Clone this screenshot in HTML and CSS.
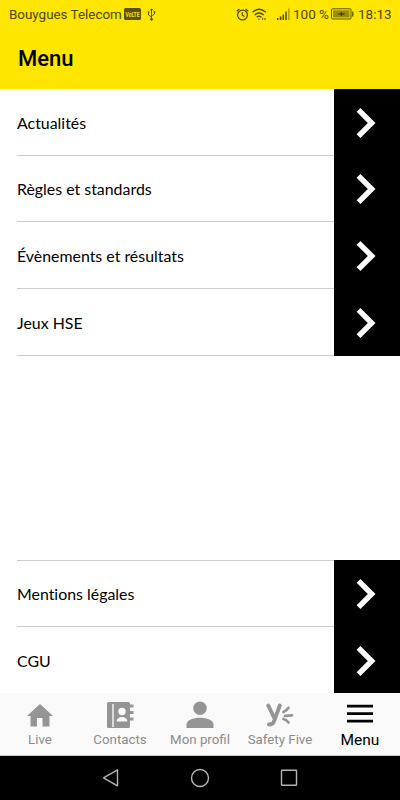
FILE: index.html
```
<!DOCTYPE html>
<html lang="fr">
<head>
    <meta charset="UTF-8">
    <meta name="viewport" content="width=device-width, initial-scale=1.0">
    <title>Menu</title>
    <link rel="stylesheet" href="styles.css">
</head>
<body>
    <div class="status-bar">
        <span class="carrier">Bouygues Telecom</span>
        <svg class="volte" width="17" height="12" viewBox="0 0 17 12">
            <rect width="17" height="12" rx="1.5" fill="#5b5206"/>
            <text x="1.500" y="8.800" textLength="14" lengthAdjust="spacingAndGlyphs">VoLTE</text>
        </svg>
        <svg class="usb" width="9" height="13" viewBox="0 0 9 13" fill="none" stroke="#5b5206">
            <path d="M4.500 1v10M1.500 4.500v2.500l3 2M7.500 4v2l-3 2M3 2.500L4.500 .8L6 2.500"/>
            <circle cx="4.500" cy="11.300" r="1" fill="#5b5206"/>
            <path d="M.7 4.300h1.600M6.700 4h1.600" stroke-width="1.500"/>
        </svg>
        <div class="status-right">
            <svg class="alarm" width="13" height="13" viewBox="0 0 13 13" fill="none" stroke="#4d4505" stroke-width="1.200">
                <circle cx="6.500" cy="7" r="4.900"/>
                <path d="M6.300 4.200v3l2.200 1.300M.7 3.300L3.400 1M12.300 3.300L9.600 1"/>
            </svg>
            <svg class="wifi" width="15" height="13" viewBox="0 0 15 13" fill="none" stroke="#4d4505" stroke-width="1.300">
                <path d="M.7 4.300Q7 -1.800 13.800 4.300M2.700 6.900Q7 3 11.700 6.900M4.700 9.200Q7 7.200 9.500 9.200"/>
                <circle cx="7" cy="11.300" r=".8" fill="#4d4505" stroke="none"/>
                <path d="M10.700 9.800v2M13 10v2" stroke-width="1"/>
            </svg>
            <svg class="signal" width="13" height="13" viewBox="0 0 13 13" fill="#4d4505">
                <path d="M0 10h1.500v2H0zM2.800 8.500h1.500V12H2.800zM5.500 6.500H7V12H5.500zM8.300 3.500h1.500V12H8.300z"/>
                <path d="M11.200 .5h1.300V12h-1.300z" opacity=".5"/>
            </svg>
            <span class="percent">100 %</span>
            <svg class="battery" width="23" height="12" viewBox="0 0 23 12">
                <rect x=".5" y=".8" width="19.500" height="10.200" rx="1" fill="none" stroke="#5b5206"/>
                <rect x="2" y="2.300" width="16.500" height="7.200" fill="#9d8d04"/>
                <path d="M5.500 6l4-.8 1-1.700.7 1.700 4 .8-4 .8-1 1.700-.7-1.700z" fill="#3b3504"/>
                <path d="M21.800 3.500v5" stroke="#5b5206" stroke-width="1.300"/>
            </svg>
            <span class="time">18:13</span>
        </div>
    </div>
    <header class="header">
        <h1>Menu</h1>
    </header>

    <main class="content">
        <ul class="menu-list">
            <li class="row">
                <span class="row-label">Actualités</span>
                <span class="row-arrow"><svg width="20" height="32" viewBox="0 0 20 32"><path d="M2.500 2.800L15.700 16L2.500 29.200"/></svg></span>
            </li>
            <li class="row">
                <span class="row-label">Règles et standards</span>
                <span class="row-arrow"><svg width="20" height="32" viewBox="0 0 20 32"><path d="M2.500 2.800L15.700 16L2.500 29.200"/></svg></span>
            </li>
            <li class="row">
                <span class="row-label">Évènements et résultats</span>
                <span class="row-arrow"><svg width="20" height="32" viewBox="0 0 20 32"><path d="M2.500 2.800L15.700 16L2.500 29.200"/></svg></span>
            </li>
            <li class="row">
                <span class="row-label">Jeux HSE</span>
                <span class="row-arrow"><svg width="20" height="32" viewBox="0 0 20 32"><path d="M2.500 2.800L15.700 16L2.500 29.200"/></svg></span>
            </li>
        </ul>
        <ul class="menu-list legal">
            <li class="row">
                <span class="row-label">Mentions légales</span>
                <span class="row-arrow"><svg width="20" height="32" viewBox="0 0 20 32"><path d="M2.500 2.800L15.700 16L2.500 29.200"/></svg></span>
            </li>
            <li class="row">
                <span class="row-label">CGU</span>
                <span class="row-arrow"><svg width="20" height="32" viewBox="0 0 20 32"><path d="M2.500 2.800L15.700 16L2.500 29.200"/></svg></span>
            </li>
        </ul>
    </main>

    <nav class="tabs">
        <a class="tab">
            <svg width="28" height="28" viewBox="0 0 28 28" fill="#959595">
                <path d="M14 3L1 15h3.500v10.500H11V17h5.500v8.500h7V15H27z"/>
            </svg>
            <span>Live</span>
        </a>
        <a class="tab">
            <svg width="28" height="28" viewBox="0 0 28 28">
                <path d="M2.500 1h20a1.500 1.500 0 0 1 1.500 1.500V3.500h3.500v3H24v3.500h3.500V13H24v3.500h3.500v3H24v6a1.500 1.500 0 0 1-1.500 1.500h-20A1.500 1.500 0 0 1 1 25.500v-23A1.500 1.500 0 0 1 2.500 1z" fill="#959595"/>
                <path d="M7 3v23" stroke="#fafafa" stroke-width="1.400"/>
                <circle cx="16" cy="10.500" r="3.700" fill="#fafafa"/>
                <path d="M10.700 20.500c0-6 10.600-6 10.600 0z" fill="#fafafa"/>
            </svg>
            <span>Contacts</span>
        </a>
        <a class="tab">
            <svg width="28" height="28" viewBox="0 0 28 28" fill="#959595">
                <circle cx="14" cy="7.300" r="6.800"/>
                <path d="M.5 27v-3.500C.5 14.500 27.500 14.500 27.500 23.500V27z"/>
            </svg>
            <span>Mon profil</span>
        </a>
        <a class="tab">
            <svg width="28" height="28" viewBox="0 0 28 28" fill="none" stroke="#959595" stroke-linecap="round">
                <path d="M2.300 4.500L8 16.500M13.800 4.500L8.500 19Q7 24 3 23.500" stroke-width="3.900"/>
                <path d="M17.500 11Q20.500 9.800 22.500 6.800M19 14.800L26 14.300M17.500 18Q20.500 18.800 22.500 21.500" stroke-width="2.800"/>
            </svg>
            <span>Safety Five</span>
        </a>
        <a class="tab active">
            <svg width="28" height="28" viewBox="0 0 28 28" stroke="#000" stroke-width="2.800">
                <path d="M1 5.200h26M1 12.700h26M1 20.200h26"/>
            </svg>
            <span>Menu</span>
        </a>
    </nav>

    <div class="system-nav">
        <svg width="18" height="20" viewBox="0 0 18 20"><path d="M15.500 1.800v16L1.500 9.800z"/></svg>
        <svg width="20" height="20" viewBox="0 0 20 20"><circle cx="10" cy="10" r="8.500"/></svg>
        <svg width="18" height="20" viewBox="0 0 18 20"><rect x="1.500" y="2.200" width="15" height="15" rx=".5"/></svg>
    </div>
</body>
</html>
```
FILE: styles.css
```
* {
    box-sizing: border-box;
}

body {
    width: 400px;
    height: 800px;
    margin: 0;
    display: flex;
    flex-direction: column;
    overflow: hidden;
    background: #fff;
    font-family: Roboto, sans-serif;
    color: #000;
}

.status-bar {
    height: 28px;
    display: flex;
    align-items: center;
    padding: 0 9px;
    background: #ffe600;
    color: #4d4505;
    font-size: 13.5px;
    white-space: nowrap;
}

.carrier {
    width: 115px;
    font-size: 13.4px;
}

.volte {
    flex-shrink: 0;
    overflow: visible;
}

.volte text {
    font: bold 7.5px Roboto, sans-serif;
    fill: #ffe600;
}

.usb {
    margin-left: 6px;
}

.status-right {
    display: flex;
    align-items: center;
    margin-left: auto;
}

.wifi {
    margin-left: 3px;
}

.signal {
    margin-left: 10px;
}

.percent {
    width: 36px;
    margin-left: 3px;
}

.battery {
    margin-left: 2px;
}

.time {
    width: 33px;
    margin-left: 4px;
}

.header {
    height: 61px;
    display: flex;
    align-items: center;
    padding: 0 18px;
    background: #ffe600;
}

.header h1 {
    margin: 0;
    font-size: 22px;
    font-weight: 500;
}

.content {
    flex: 1;
    display: flex;
    flex-direction: column;
    justify-content: space-between;
}

.menu-list {
    margin: 0;
    padding: 0;
    list-style: none;
}

.row {
    height: 66.65px;
    display: flex;
    padding-left: 17px;
}

.row-label {
    flex: 1;
    display: flex;
    align-items: center;
    padding-top: 1px;
    border-bottom: 1px solid #ccc;
    font-family: Lato, sans-serif;
    font-size: 15.9px;
    font-variant-ligatures: none;
    white-space: nowrap;
}

.legal .row:first-child {
    height: 67.6px;
}

.legal .row:last-child {
    height: 65.6px;
}

.legal .row:first-child .row-label {
    padding-top: 0;
    border-top: 1px solid #ccc;
}

.legal .row:last-child .row-label {
    padding-top: 0;
    border-bottom: none;
}

.row-arrow {
    width: 66.5px;
    display: flex;
    align-items: center;
    padding: 1px 0 0 22.5px;
    background: #000;
}

.row-arrow path {
    fill: none;
    stroke: #fff;
    stroke-width: 5.4;
}

.tabs {
    height: 63px;
    display: grid;
    grid-template-columns: repeat(5, 1fr);
    background: #fafafa;
    border-bottom: 1px solid #ccc;
}

.tab {
    display: flex;
    flex-direction: column;
    align-items: center;
    padding-top: 8px;
    color: #8b8b8b;
    font-size: 13.3px;
    line-height: 22px;
    white-space: nowrap;
}

.tab.active {
    color: #000;
    font-size: 15.5px;
}

.system-nav {
    height: 44px;
    display: flex;
    align-items: center;
    justify-content: center;
    gap: 70px;
    background: #000;
}

.system-nav svg {
    fill: none;
    stroke: #b5b5b5;
    stroke-width: 1.4;
    stroke-linejoin: round;
}
```
